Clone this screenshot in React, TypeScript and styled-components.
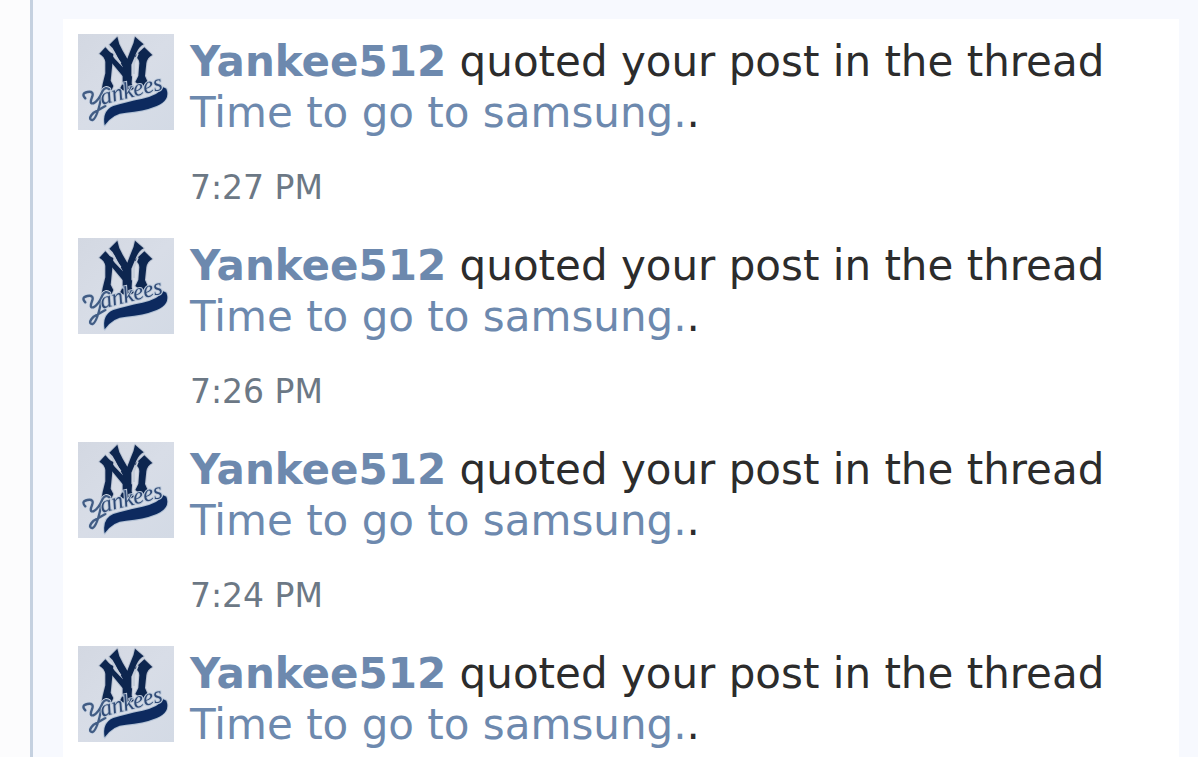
import React from "react";
import styled, { createGlobalStyle } from "styled-components";

const GlobalStyle = createGlobalStyle`
  * { box-sizing: border-box; }
  body {
    margin: 0;
    background: #fcfcfd;
    color: #2c2c2c;
    font-family: Verdana, "DejaVu Sans", sans-serif;
  }
`;

const Page = styled.main`
  display: flex;
  min-height: 100vh;
  padding-left: 30px;
`;

const Content = styled.section`
  display: flex;
  flex: 1;
  border-left: 3px solid #c5d1e0;
  background: #f7f9fe;
  padding: 19px 19px 0 30px;
`;

const AlertList = styled.ol`
  flex: 1;
  margin: 0;
  padding: 15px 15px 0;
  list-style: none;
  background: #ffffff;
`;

const Alert = styled.li`
  display: flex;
  align-items: flex-start;
  gap: 16px;

  & + & {
    margin-top: 21px;
  }
`;

const AvatarLink = styled.a`
  display: block;
  flex: none;
  width: 96px;
  height: 96px;
`;

const AvatarArt = styled.svg`
  display: block;
  width: 100%;
  height: 100%;
`;

const Body = styled.div`
  flex: 1;
  min-width: 0;
`;

const Message = styled.p`
  margin: 0 0 21px;
  padding-top: 2px;
  font-size: 42px;
  line-height: 51px;
`;

const TextLink = styled.a<{ $strong?: boolean }>`
  color: #6d89ae;
  font-weight: ${(p) => (p.$strong ? 700 : 400)};
  text-decoration: none;
`;

const Time = styled.time`
  display: block;
  color: #6c7885;
  font-size: 33px;
  line-height: 58px;
`;

const LETTER_Y_SWASH =
  "M22 193 Q8 178 28 174 Q50 170 42 190 Q33 211 46 208 Q62 200 73 172 Q83 156 94 166 M72 178 Q59 250 44 258 Q27 256 47 236 L82 216";

const Avatar = () => (
  <AvatarArt viewBox="0 0 288 288" role="img" aria-label="Yankee512">
    <defs>
      <linearGradient id="paper" x1="0" y1="0" x2="1" y2="1">
        <stop offset="0" stopColor="#d3d8e2" />
        <stop offset="0.5" stopColor="#d8dde7" />
        <stop offset="1" stopColor="#d3dae5" />
      </linearGradient>
      <filter id="soften">
        <feGaussianBlur stdDeviation="2" />
      </filter>
      <g id="monogram">
        <path d="M64 59 L82 40 Q90 54 106 60 L102 100 L98 140 L106 156 L100 170 L84 164 L70 172 L74 150 L82 118 L82 84 Q80 68 64 59 Z" />
        <path d="M82 40 Q96 54 110 74 L162 128 L160 152 L142 136 L96 80 Z" />
        <path d="M94 32 L118 8 Q122 32 134 50 L148 74 L158 48 Q168 28 171 8 L197 31 Q184 38 176 54 L160 92 L160 148 L168 164 L148 174 L126 164 L134 148 L134 98 L112 56 Q105 40 94 32 Z" />
        <path d="M170 67 L199 40 L223 63 Q208 70 205 88 L201 126 L209 144 L192 158 L172 144 L181 126 L184 88 Q184 74 170 67 Z" />
      </g>
    </defs>
    <rect width="288" height="288" fill="url(#paper)" />
    <g filter="url(#soften)">
      <use href="#monogram" fill="#adb8ca" stroke="#b8c2d1" strokeWidth="6" strokeLinejoin="round" />
      <use href="#monogram" fill="#0f2650" />
      <path
        d="M92 36 Q106 50 114 68 L128 88 M180 58 L168 88 L168 120"
        fill="none"
        stroke="#c3ccd9"
        strokeWidth="5"
      />
      <path
        d="M80 274 Q72 230 106 216 Q140 205 194 194 Q242 184 256 160 L265 164 Q278 198 236 216 Q194 233 144 236 Q104 238 80 274 Z"
        fill="#0b2c5e"
        stroke="#b3c1d5"
        strokeWidth="6"
        strokeLinejoin="round"
        paintOrder="stroke"
      />
      <path d={LETTER_Y_SWASH} fill="none" stroke="#ccd6e4" strokeWidth="12" strokeLinecap="round" />
      <path d={LETTER_Y_SWASH} fill="none" stroke="#425d85" strokeWidth="7" strokeLinecap="round" />
      <text
        x="72"
        y="212"
        transform="rotate(-14 72 212)"
        fontFamily="Liberation Serif, serif"
        fontSize="70"
        fontStyle="italic"
        fontWeight="400"
        fill="#2f4a76"
        stroke="#bcc9da"
        strokeWidth="6"
        paintOrder="stroke"
      >
        ankees
      </text>
    </g>
  </AvatarArt>
);

const alerts = [
  { id: 1, time: "7:27 PM" },
  { id: 2, time: "7:26 PM" },
  { id: 3, time: "7:24 PM" },
  { id: 4 },
];

export default function App() {
  return (
    <>
      <GlobalStyle />
      <Page>
        <Content>
          <AlertList>
            {alerts.map(({ id, time }) => (
              <Alert key={id}>
                <AvatarLink href="#member">
                  <Avatar />
                </AvatarLink>
                <Body>
                  <Message>
                    <TextLink href="#member" $strong>
                      Yankee512
                    </TextLink>{" "}
                    quoted your post in the thread{" "}
                    <TextLink href="#thread">Time to go to samsung.</TextLink>.
                  </Message>
                  {time && <Time>{time}</Time>}
                </Body>
              </Alert>
            ))}
          </AlertList>
        </Content>
      </Page>
    </>
  );
}
